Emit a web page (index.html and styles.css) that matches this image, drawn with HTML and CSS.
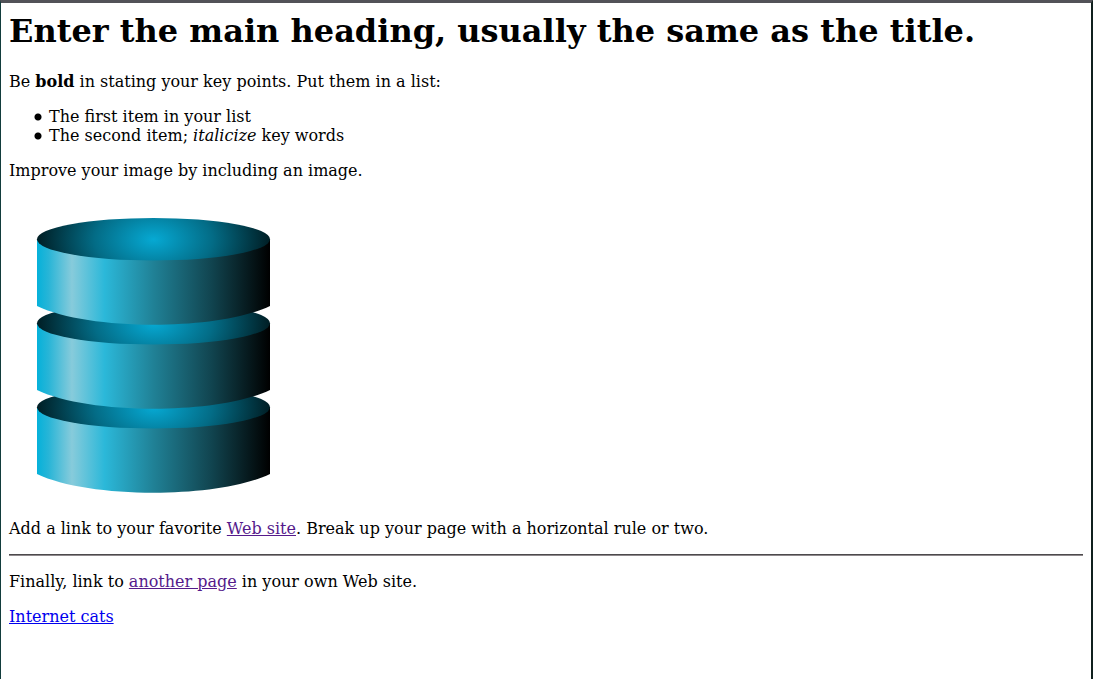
FILE: index.html
```html
<!DOCTYPE html>
<html lang="en">
<head>
<meta charset="utf-8">
<title>Enter a title</title>
<link rel="stylesheet" href="styles.css">
</head>
<body class="page">
<h1 class="title">Enter the main heading, usually the same as the title.</h1>
<p class="text">Be <b>bold</b> in stating your key points. Put them in a list:</p>
<ul class="points">
<li class="point">The first item in your list</li>
<li class="point">The second item; <i>italicize</i> key words</li>
</ul>
<p class="text">Improve your image by including an image.</p>
<svg class="picture" width="290" height="307" viewBox="0 0 290 307" role="img" aria-label="Database">
<defs>
<linearGradient id="side">
<stop offset="0" stop-color="#05b1da"/>
<stop offset=".05" stop-color="#28b5d7"/>
<stop offset=".15" stop-color="#87cbdb"/>
<stop offset=".29" stop-color="#2bb8d9"/>
<stop offset=".5" stop-color="#208196"/>
<stop offset=".75" stop-color="#11444f"/>
<stop offset="1" stop-color="#000000"/>
</linearGradient>
<radialGradient id="lid" gradientUnits="userSpaceOnUse" cx="0" cy="0" r="118" gradientTransform="translate(144.5 43.5) scale(1 .6)">
<stop offset="0" stop-color="#06a9d3"/>
<stop offset=".5" stop-color="#036c86"/>
<stop offset="1" stop-color="#001c22"/>
</radialGradient>
<g id="disk">
<path fill="url(#side)" d="M28 43.500V110C80 135 209 135 261 110V43.500Z"/>
<ellipse fill="url(#lid)" cx="144.500" cy="43.250" rx="116.500" ry="21.250"/>
</g>
</defs>
<use href="#disk" y="168"/>
<use href="#disk" y="84"/>
<use href="#disk"/>
</svg>
<p class="text">Add a link to your favorite <a class="visited" href="#site">Web site</a>. Break up your page with a horizontal rule or two.</p>
<hr class="rule">
<p class="text">Finally, link to <a class="visited" href="#page">another page</a> in your own Web site.</p>
<p class="text"><a class="link" href="#cats">Internet cats</a></p>
</body>
</html>
```
FILE: styles.css
```css
html {
  background: #fff;
}

.page {
  box-sizing: border-box;
  min-height: 100vh;
  margin: 0;
  padding: 9px 8px 0;
  border-top: 3px solid #525258;
  border-left: 1px solid #123c3c;
  border-right: 2px solid #10201e;
  font: 16px/19px "DejaVu Serif", serif;
  color: #000;
}

.title {
  margin: 0 0 22px;
  font-size: 32px;
  line-height: 38px;
}

.text {
  margin: 16px 0;
}

.points {
  margin: 16px 0;
  padding-left: 24px;
  list-style: none;
}

.point {
  padding-left: 16px;
  background: radial-gradient(circle at 5px 10px, #000 3px, transparent 4px) no-repeat;
}

.picture {
  display: block;
}

.rule {
  height: 2px;
  margin: 16px 0;
  border: 0;
  background: linear-gradient(#4c4a4c 50%, #8e898c 50%);
}

.visited {
  color: #551a8b;
}

.link {
  color: #0000ee;
}
```
